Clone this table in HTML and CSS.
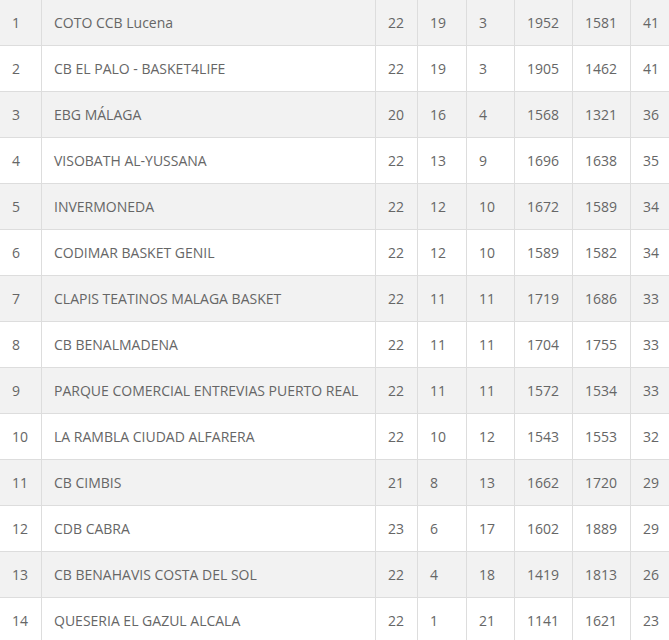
FILE: index.html
```html
<!DOCTYPE html>
<html>
<head>
<meta charset="utf-8">
<link rel="stylesheet" href="styles.css">
</head>
<body>
<div class="standings">
  <div class="row"><div class="c">1</div><div class="c">COTO CCB Lucena</div><div class="c">22</div><div class="c">19</div><div class="c">3</div><div class="c">1952</div><div class="c">1581</div><div class="c">41</div></div>
  <div class="row"><div class="c">2</div><div class="c">CB EL PALO - BASKET4LIFE</div><div class="c">22</div><div class="c">19</div><div class="c">3</div><div class="c">1905</div><div class="c">1462</div><div class="c">41</div></div>
  <div class="row"><div class="c">3</div><div class="c">EBG MÁLAGA</div><div class="c">20</div><div class="c">16</div><div class="c">4</div><div class="c">1568</div><div class="c">1321</div><div class="c">36</div></div>
  <div class="row"><div class="c">4</div><div class="c">VISOBATH AL-YUSSANA</div><div class="c">22</div><div class="c">13</div><div class="c">9</div><div class="c">1696</div><div class="c">1638</div><div class="c">35</div></div>
  <div class="row"><div class="c">5</div><div class="c">INVERMONEDA</div><div class="c">22</div><div class="c">12</div><div class="c">10</div><div class="c">1672</div><div class="c">1589</div><div class="c">34</div></div>
  <div class="row"><div class="c">6</div><div class="c">CODIMAR BASKET GENIL</div><div class="c">22</div><div class="c">12</div><div class="c">10</div><div class="c">1589</div><div class="c">1582</div><div class="c">34</div></div>
  <div class="row"><div class="c">7</div><div class="c">CLAPIS TEATINOS MALAGA BASKET</div><div class="c">22</div><div class="c">11</div><div class="c">11</div><div class="c">1719</div><div class="c">1686</div><div class="c">33</div></div>
  <div class="row"><div class="c">8</div><div class="c">CB BENALMADENA</div><div class="c">22</div><div class="c">11</div><div class="c">11</div><div class="c">1704</div><div class="c">1755</div><div class="c">33</div></div>
  <div class="row"><div class="c">9</div><div class="c">PARQUE COMERCIAL ENTREVIAS PUERTO REAL</div><div class="c">22</div><div class="c">11</div><div class="c">11</div><div class="c">1572</div><div class="c">1534</div><div class="c">33</div></div>
  <div class="row"><div class="c">10</div><div class="c">LA RAMBLA CIUDAD ALFARERA</div><div class="c">22</div><div class="c">10</div><div class="c">12</div><div class="c">1543</div><div class="c">1553</div><div class="c">32</div></div>
  <div class="row"><div class="c">11</div><div class="c">CB CIMBIS</div><div class="c">21</div><div class="c">8</div><div class="c">13</div><div class="c">1662</div><div class="c">1720</div><div class="c">29</div></div>
  <div class="row"><div class="c">12</div><div class="c">CDB CABRA</div><div class="c">23</div><div class="c">6</div><div class="c">17</div><div class="c">1602</div><div class="c">1889</div><div class="c">29</div></div>
  <div class="row"><div class="c">13</div><div class="c">CB BENAHAVIS COSTA DEL SOL</div><div class="c">22</div><div class="c">4</div><div class="c">18</div><div class="c">1419</div><div class="c">1813</div><div class="c">26</div></div>
  <div class="row"><div class="c">14</div><div class="c">QUESERIA EL GAZUL ALCALA</div><div class="c">22</div><div class="c">1</div><div class="c">21</div><div class="c">1141</div><div class="c">1621</div><div class="c">23</div></div>
</div>
</body>
</html>
```
FILE: styles.css
```css
html, body {
  margin: 0;
  padding: 0;
  background: #fff;
}
.standings {
  width: 700px;
  font-family: "Open Sans", "Liberation Sans", sans-serif;
  font-size: 14px;
  color: #666;
}
.row {
  display: grid;
  grid-template-columns: 42px 334px 42px 49px 48px 58px 58px 69px;
  height: 46px;
  border-bottom: 1px solid #ddd;
  box-sizing: border-box;
}
.row:nth-child(odd) {
  background: #f2f2f2;
}
.c {
  display: flex;
  align-items: center;
  padding-left: 12px;
  border-right: 1px solid #ddd;
  box-sizing: border-box;
  white-space: nowrap;
  overflow: hidden;
}
```
